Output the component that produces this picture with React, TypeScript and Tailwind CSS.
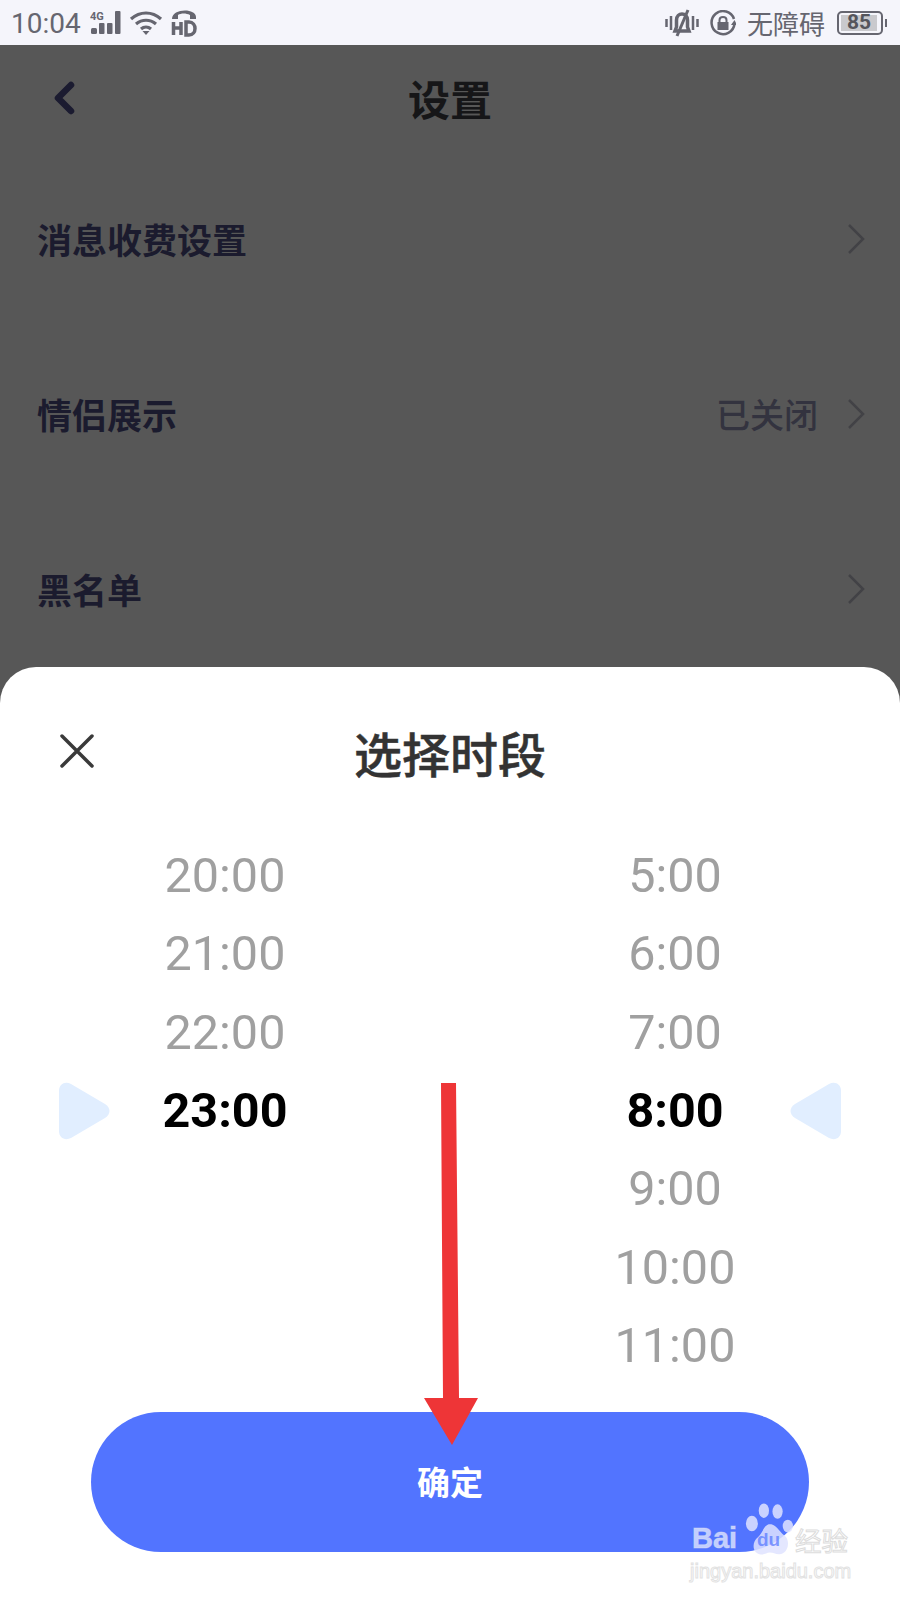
const cjk = "font-['Noto_Sans_CJK_SC','Noto_Sans',sans-serif]";

const settings = [
  { label: "消息收费设置", value: "" },
  { label: "情侣展示", value: "已关闭" },
  { label: "黑名单", value: "" },
];
const startHours = ["20:00", "21:00", "22:00", "23:00"];
const endHours = ["5:00", "6:00", "7:00", "8:00", "9:00", "10:00", "11:00"];

function StatusBar() {
  return (
    <div className="h-[45px] shrink-0 bg-[#f5f5fb] flex items-center justify-between pl-[11px] pr-[13px] text-[#666670]">
      <div className="flex items-center">
        <span className="font-['Roboto',sans-serif] text-[28px] leading-none pt-[2px]">10:04</span>
        <svg width="32" height="24" viewBox="0 0 32 24" className="ml-[9px]" fill="#666670">
          <text x="0" y="9" fontSize="11" fontWeight="700" fontFamily="Roboto, sans-serif">4G</text>
          <rect x="1" y="17" width="6" height="6" rx="1.500" />
          <rect x="9" y="12" width="5.500" height="11" rx="1" />
          <rect x="17" y="12" width="5.500" height="11" rx="1" />
          <rect x="25" y="0" width="5.500" height="23" rx="1" />
        </svg>
        <svg width="34" height="26" viewBox="0 0 34 26" className="ml-[7px]" fill="none" stroke="#666670" strokeWidth="3.200">
          <path d="M2 9C11 1 23 1 32 9" />
          <path d="M7 14C13 9 21 9 27 14" />
          <path d="M12 19C15 16.500 19 16.500 22 19" />
          <path d="M13.500 21H20.500L17 25Z" fill="#666670" stroke="none" />
        </svg>
        <svg width="26" height="28" viewBox="0 0 26 28" className="ml-[8px]" fill="none">
          <path d="M1 10C1 -1 25 -1 25 8V10H19V6C15 4 10 4 7 6V10Z" fill="#666670" />
          <path d="M2.500 13V26M10 13V26M2.500 19H10" stroke="#666670" strokeWidth="3.500" />
          <path d="M15 13H18C26 13 26 26 18 26H15Z" stroke="#666670" strokeWidth="3.500" />
        </svg>
      </div>
      <div className="flex items-center">
        <svg width="34" height="28" viewBox="0 0 34 28" fill="none" stroke="#666670" strokeWidth="3.500">
          <path d="M1.500 10V18M6 7V21M28 7V21M32.500 10V18" strokeWidth="2.500" />
          <path d="M10 22H24L22.500 18V11C22.500 3 11.500 3 11.500 11V18Z" />
          <path d="M23 1L12 27" strokeWidth="3" />
        </svg>
        <svg width="26" height="26" viewBox="0 0 26 26" fill="none" stroke="#666670" strokeWidth="2.500" className="ml-[11px]">
          <path d="M24 9A11.500 11.500 0 1 0 24.500 14" />
          <path d="M24.500 10L21 15H27Z" fill="#666670" stroke="none" />
          <rect x="7.500" y="12" width="11" height="8" fill="#666670" stroke="none" />
          <path d="M9.500 12V10C9.500 6 16.500 6 16.500 10V12" strokeWidth="2" />
        </svg>
        <span className={`${cjk} text-[26px] leading-none ml-[11px]`}>无障碍</span>
        <div className="ml-[12px] flex items-center">
          <div className="w-[46px] h-[24px] rounded-[5px] border-2 border-[#666670] p-[2px] flex">
            <div className="w-[36px] h-full bg-[#c9c9cd] flex items-center justify-center font-['Roboto',sans-serif] font-bold text-[21px] leading-none text-[#55555c]">
              85
            </div>
          </div>
          <div className="w-[2px] h-[8px] bg-[#666670] ml-[2px]" />
        </div>
      </div>
    </div>
  );
}

function Chevron() {
  return (
    <svg width="18" height="32" viewBox="0 0 18 32" fill="none" stroke="#424246" strokeWidth="2.500" className="ml-[29px]">
      <path d="M2 2L16 16L2 30" />
    </svg>
  );
}

function Background() {
  return (
    <div className={`flex-1 min-h-0 overflow-hidden ${cjk}`}>
      <div className="relative h-[106px] flex items-center justify-center">
        <svg width="24" height="34" viewBox="0 0 24 34" fill="none" stroke="#1b1b30" strokeWidth="6.500" strokeLinecap="round" strokeLinejoin="round" className="absolute left-[52px] top-[36px]">
          <path d="M19 4L6 17L19 30" />
        </svg>
        <span className="text-[42px] leading-none font-bold text-[#161618]">设置</span>
      </div>
      <div>
        {settings.map((row) => (
          <div key={row.label} className="h-[175px] flex items-center justify-between pl-[37px] pr-[35px]">
            <span className="text-[35px] font-bold leading-none text-[#1b1b2e]">{row.label}</span>
            <div className="flex items-center">
              {row.value && <span className="text-[34px] font-medium leading-none text-[#33333f]">{row.value}</span>}
              <Chevron />
            </div>
          </div>
        ))}
      </div>
    </div>
  );
}

function HourColumn({ hours, selected }: { hours: string[]; selected: string }) {
  return (
    <div className="w-[230px] flex flex-col items-center font-['Roboto',sans-serif]">
      {hours.map((h) => (
        <div
          key={h}
          className={
            h === selected
              ? "h-[78.4px] flex items-center text-[48.5px] font-bold text-black"
              : "h-[78.4px] flex items-center text-[48.5px] text-[#a0a0a0]"
          }
        >
          {h}
        </div>
      ))}
    </div>
  );
}

function Sheet() {
  return (
    <div className="h-[933px] shrink-0 bg-white rounded-t-[36px] flex flex-col">
      <div className="relative h-[170px] flex justify-center pt-[55px]">
        <svg width="36" height="36" viewBox="0 0 36 36" fill="none" stroke="#3a3a3a" strokeWidth="3.500" strokeLinecap="round" className="absolute left-[59px] top-[66px]">
          <path d="M3 3L33 33M33 3L3 33" />
        </svg>
        <span className={`${cjk} text-[48px] leading-[60px] h-[60px] font-medium text-[#333333] [-webkit-text-stroke:0.5px_#333333]`}>选择时段</span>
      </div>
      <div className="flex items-start px-[59px]">
        <svg width="51" height="58" viewBox="0 0 51 58" className="mt-[245px] shrink-0" fill="#e1eeff">
          <path d="M0 9C0 2 6 -1 12 2L46 22C52 26 52 32 46 36L12 56C6 59 0 56 0 49Z" />
        </svg>
        <HourColumn hours={startHours} selected="23:00" />
        <div className="flex-1" />
        <HourColumn hours={endHours} selected="8:00" />
        <svg width="51" height="58" viewBox="0 0 51 58" className="mt-[245px] shrink-0" fill="#e1eeff">
          <path d="M51 9C51 2 45 -1 39 2L5 22C-1 26 -1 32 5 36L39 56C45 59 51 56 51 49Z" />
        </svg>
      </div>
      <button className={`mt-[26px] mx-[91px] h-[140px] rounded-full bg-[#5274ff] text-white text-[33px] font-bold ${cjk}`}>
        确定
      </button>
    </div>
  );
}

function Watermark() {
  return (
    <div className="absolute left-[690px] top-[1500px] w-[170px] h-[90px] pointer-events-none">
      <svg width="48" height="53" viewBox="0 0 56 62" className="absolute left-[55px] top-[3px]" fill="#dfe3ff" fillOpacity="0.85">
        <ellipse cx="8" cy="24" rx="7" ry="9" />
        <ellipse cx="22" cy="9" rx="6" ry="8.500" />
        <ellipse cx="38" cy="10" rx="6" ry="8.500" />
        <ellipse cx="50" cy="27" rx="6" ry="7.500" />
        <path d="M29 25C37 25 39 33 46 38C54 44 50 60 40 60C35 60 33 58 29 58C25 58 23 61 17 60C8 58 8 45 15 40C21 35 22 25 29 25Z" />
      </svg>
      <span className="absolute left-[2px] top-[24px] font-['Liberation_Sans',sans-serif] font-bold text-[29px] leading-none text-white/65 [-webkit-text-stroke:1px_#e6e6ee66]">Bai</span>
      <span className="absolute left-[67px] top-[30px] font-['Liberation_Sans',sans-serif] font-bold text-[19px] leading-none text-[#5274ff]/70">du</span>
      <span className={`${cjk} absolute left-[105px] top-[27px] text-[26.500px] leading-none text-white/70 [-webkit-text-stroke:1px_#dcdcdc]`}>经验</span>
      <span className="absolute left-[0px] top-[61px] font-['Liberation_Sans',sans-serif] text-[20px] leading-none text-white/70 [-webkit-text-stroke:1px_#e2e2e2]">jingyan.baidu.com</span>
    </div>
  );
}

export default function App() {
  return (
    <div className="relative w-[900px] h-[1600px] overflow-hidden bg-[#575757] flex flex-col">
      <StatusBar />
      <Background />
      <Sheet />
      {/* red annotation arrow sits over the sheet */}
      <svg width="70" height="380" viewBox="0 0 70 380" className="absolute left-[415px] top-[1080px]" fill="#ee3537">
        <path d="M26 3H41L44 318H63L37 365L9 318H28Z" />
      </svg>
      <Watermark />
    </div>
  );
}
